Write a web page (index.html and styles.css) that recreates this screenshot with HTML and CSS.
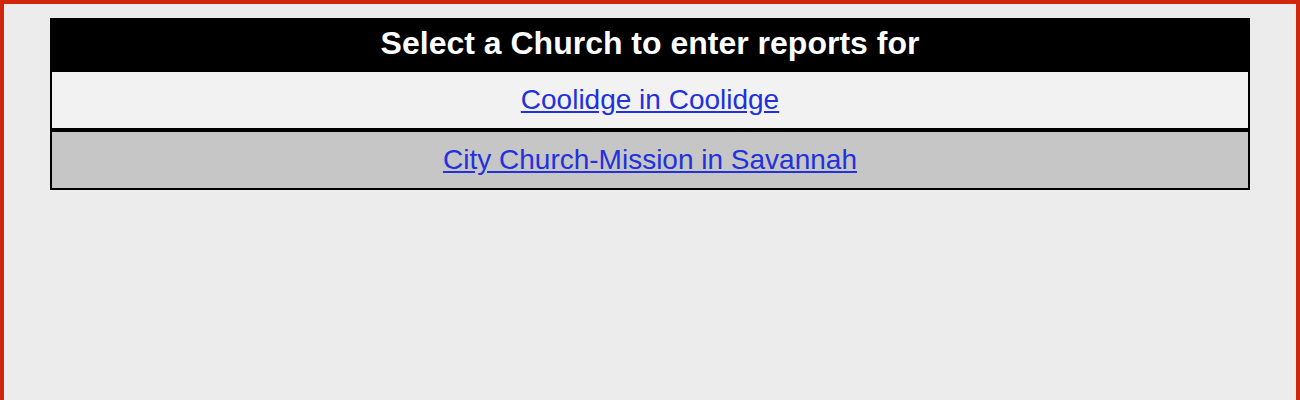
FILE: index.html
```html
<!DOCTYPE html>
<html lang="en">
  <head>
    <meta charset="UTF-8" />
    <title>Select a Church</title>
    <link rel="stylesheet" href="styles.css">
  </head>
  <body>
    <div class="church-list">
      <div class="church-header">Select a Church to enter reports for</div>
      <div class="church-row">
        <a href="#">Coolidge in Coolidge</a>
      </div>
      <div class="church-row alt">
        <a href="#">City Church-Mission in Savannah</a>
      </div>
    </div>
  </body>
</html>
```

FILE: styles.css
```css
html {
  background: #ececec;
}

body {
  margin: 0;
  background: #ececec;
  border: 4px solid #d0260c;
  box-sizing: border-box;
  min-height: 110vh;
  padding-top: 14px;
  font-family: 'Liberation Sans', Arial, sans-serif;
}

.church-list {
  width: 1200px;
  margin: 0 auto;
  border: 2px solid #000;
  box-sizing: border-box;
}

.church-header {
  background: #000;
  color: #fff;
  font-weight: bold;
  font-size: 32px;
  text-align: center;
  height: 52px;
  line-height: 46px;
}

.church-row {
  background: #f2f2f2;
  height: 56px;
  line-height: 56px;
  text-align: center;
  font-size: 28px;
}

.church-row.alt {
  background: #c6c6c6;
  border-top: 4px solid #000;
}

.church-row a {
  color: #2231dc;
}
```
